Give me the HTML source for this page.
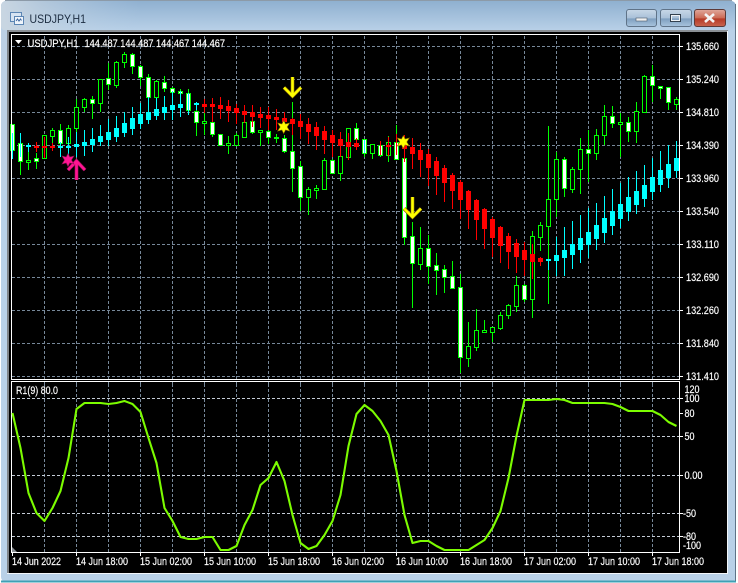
<!DOCTYPE html>
<html><head><meta charset="utf-8"><title>USDJPY,H1</title>
<style>
html,body{margin:0;padding:0;background:#fff;width:738px;height:583px;overflow:hidden}
svg{display:block}
text{font-family:"Liberation Sans",sans-serif;font-size:11px;fill:#fff;stroke:#fff;stroke-width:.18px}
</style></head><body>
<svg width="738" height="583" viewBox="0 0 738 583" xmlns="http://www.w3.org/2000/svg">
<defs>
<linearGradient id="tb" x1="0" y1="0" x2="0" y2="1"><stop offset="0" stop-color="#8fb0d0"/><stop offset="1" stop-color="#b9d1e8"/></linearGradient>
<linearGradient id="tl" x1="0" y1="0" x2="1" y2="0"><stop offset="0" stop-color="#c9d6e2"/><stop offset=".3" stop-color="#c9d6e2" stop-opacity=".6"/><stop offset="1" stop-color="#b9d1e8" stop-opacity="0"/></linearGradient>
<linearGradient id="bt" x1="0" y1="0" x2="0" y2="1"><stop offset="0" stop-color="#c8d8e8"/><stop offset=".5" stop-color="#a9c0d8"/><stop offset=".55" stop-color="#7f9fc0"/><stop offset="1" stop-color="#a8c4de"/></linearGradient>
<linearGradient id="cl" x1="0" y1="0" x2="0" y2="1"><stop offset="0" stop-color="#e0a89c"/><stop offset=".5" stop-color="#cc6a55"/><stop offset=".55" stop-color="#b63a26"/><stop offset="1" stop-color="#c9654f"/></linearGradient>
</defs>
<!-- window frame -->
<rect x="1" y="1" width="735" height="581" rx="5" fill="#b9d1e8"/>
<rect x="1" y="1" width="735" height="30" rx="5" fill="url(#tb)"/>
<rect x="1" y="1" width="140" height="30" rx="5" fill="url(#tl)"/>
<rect x="1" y="30" width="6" height="160" fill="#bcd0e4"/>
<path d="M1 581.5H736" stroke="#3fa0b4" stroke-width="2" fill="none"/>
<path d="M5 0.5H732" stroke="#8c9aa8" fill="none"/>
<path d="M735.5 4V581" stroke="#5d7488" fill="none"/>
<!-- title -->
<rect x="10.5" y="12.5" width="11" height="9" fill="#d7e4f2" stroke="#5c86b4"/>
<rect x="14.5" y="16.5" width="9" height="8" fill="#eef4fb" stroke="#5c86b4"/>
<path d="M16 21l1.5-2 1.5 2 1.500-2 1 1.500" stroke="#3a66a0" fill="none"/>
<text x="29.500" y="23" textLength="56.500" lengthAdjust="spacingAndGlyphs" style="font-size:12px;fill:#1c2c40;stroke:none">USDJPY,H1</text>
<!-- buttons -->
<rect x="626.500" y="9.500" width="30" height="17" rx="2.500" fill="url(#bt)" stroke="#5f7388"/>
<rect x="636" y="18" width="11" height="3" fill="#f0f0f0" stroke="#4b5a6a" stroke-width=".6"/>
<rect x="660.500" y="9.500" width="31" height="17" rx="2.500" fill="url(#bt)" stroke="#5f7388"/>
<rect x="670.500" y="14.500" width="10" height="7" fill="none" stroke="#33414f" stroke-width="1"/>
<rect x="671.500" y="15.500" width="8" height="5" fill="none" stroke="#eef2f6" stroke-width="1"/>
<rect x="694.500" y="9.500" width="31" height="17" rx="2.500" fill="url(#cl)" stroke="#5d3a38"/>
<path d="M705 14l9 8M714 14l-9 8" stroke="#f4f4f4" stroke-width="2.600" fill="none"/>
<!-- client -->
<rect x="7" y="30" width="721" height="3" fill="#8a8f94"/>
<rect x="7" y="30" width="2" height="543" fill="#7f8489"/>
<rect x="9" y="32" width="718" height="541" fill="#000"/>
<path d="M7 573.500H727.500V31" stroke="#f2f6fa" fill="none"/>
<g shape-rendering="crispEdges">
<!-- grid -->
<path d="M12 46.500H680M12 79.500H680M12 112.500H680M12 145.500H680M12 178.500H680M12 211.500H680M12 244.500H680M12 277.500H680M12 310.500H680M12 343.500H680M12 376.500H680" stroke="#778899" stroke-dasharray="3 2" fill="none"/>
<path d="M44.500 36V384M76.500 36V384M108.500 36V384M140.500 36V384M172.500 36V384M204.500 36V384M236.500 36V384M268.500 36V384M300.500 36V384M332.500 36V384M364.500 36V384M396.500 36V384M428.500 36V384M460.500 36V384M492.500 36V384M524.500 36V384M556.500 36V384M588.500 36V384M620.500 36V384M652.500 36V384M44.500 384V552M76.500 384V552M108.500 384V552M140.500 384V552M172.500 384V552M204.500 384V552M236.500 384V552M268.500 384V552M300.500 384V552M332.500 384V552M364.500 384V552M396.500 384V552M428.500 384V552M460.500 384V552M492.500 384V552M524.500 384V552M556.500 384V552M588.500 384V552M620.500 384V552M652.500 384V552" stroke="#778899" stroke-dasharray="3 2" fill="none"/>
<path d="M12 398.500H680M12 436.500H680M12 475.500H680M12 513.500H680M12 536.500H680" stroke="#c4ccd6" stroke-dasharray="3 2" fill="none"/>
<!-- regular wicks -->
<path stroke="#0f0" fill="none" d="M20.500 143V175M28.500 151V170M36.500 153V169M44.500 135V158M52.500 128V145M60.500 124V147M68.500 125V143M76.500 99V133M84.500 98V112M92.500 96V119M100.500 79V112M108.500 63V90M116.500 61V88M124.500 52V68M132.500 53V74M140.500 65V86M148.500 74V103M156.500 80V100M164.500 76V92M172.500 87V102M180.500 89V103M188.500 89V115M196.500 107V136M204.500 107V135M212.500 122V137M220.500 134V146M228.500 136V154M236.500 133V146M244.500 112V137M252.500 120V134M260.500 130V146M268.500 129V144M276.500 134V143M284.500 135V153M292.500 102V192M300.500 161V211M308.500 187V215M316.500 185V199M324.500 158V190M332.500 159V174M340.500 156V181M348.500 128V157M356.500 123V144M364.500 139V157M372.500 144V159M380.500 145V157M388.500 136V162M396.500 125V159M404.500 158V245M412.500 222V308M420.500 227V270M428.500 235V284M436.500 253V295M444.500 265V293M452.500 261V289M460.500 274V373M468.500 322V367M476.500 309V351M484.500 320V333M492.500 327V342M500.500 312V330M508.500 304V319M516.500 276V312M524.500 284V302M532.500 231V318M540.500 222V251M548.500 126V304M556.500 152V217M564.500 157V197M572.500 167V193M580.500 138V194M588.500 130V182M596.500 129V160M604.500 105V145M612.500 106V128M620.500 113V157M628.500 117V142M636.500 102V143M644.500 75V113M652.500 65V102M660.500 86V99M668.500 87V110M676.500 97V110"/>
<!-- bull candles -->
<path stroke="#0f0" fill="#000" d="M26.500 160.500h4v2h-4zM42.500 135.500h4v23h-4zM50.500 130.500h4v6h-4zM66.500 128.500h4v15h-4zM74.500 107.500h4v21h-4zM82.500 99.500h4v8h-4zM98.500 79.500h4v24h-4zM114.500 62.500h4v23h-4zM122.500 54.500h4v8h-4zM154.500 81.500h4v16h-4zM202.500 121.500h4v2h-4zM226.500 143.500h4v2h-4zM234.500 135.500h4v10h-4zM242.500 122.500h4v15h-4zM258.500 130.500h4v2h-4zM274.500 137.500h4v1h-4zM306.500 189.500h4v8h-4zM314.500 188.500h4v2h-4zM322.500 160.500h4v29h-4zM338.500 156.500h4v17h-4zM346.500 128.500h4v29h-4zM370.500 144.500h4v9h-4zM386.500 142.500h4v13h-4zM418.500 248.500h4v16h-4zM466.500 346.500h4v12h-4zM474.500 330.500h4v17h-4zM482.500 330.500h4v2h-4zM490.500 327.500h4v5h-4zM498.500 315.500h4v13h-4zM506.500 305.500h4v10h-4zM514.500 285.500h4v21h-4zM530.500 236.500h4v63h-4zM538.500 225.500h4v12h-4zM546.500 199.500h4v27h-4zM554.500 159.500h4v40h-4zM570.500 169.500h4v20h-4zM578.500 149.500h4v20h-4zM594.500 135.500h4v18h-4zM602.500 116.500h4v19h-4zM618.500 122.500h4v2h-4zM634.500 111.500h4v20h-4zM642.500 76.500h4v36h-4zM674.500 99.500h4v5h-4z"/>
<!-- heiken ashi bodies -->
<path fill="#f00" d="M34 146h5v2h-5zM42 146h5v2h-5zM50 146h5v2h-5zM202 104h5v3h-5zM210 104h5v3h-5zM218 105h5v4h-5zM226 106h5v5h-5zM234 108h5v5h-5zM242 111h5v4h-5zM250 112h5v5h-5zM258 114h5v4h-5zM266 115h5v4h-5zM274 117h5v3h-5zM282 118h5v4h-5zM290 119h5v5h-5zM298 121h5v6h-5zM306 124h5v8h-5zM314 127h5v9h-5zM322 131h5v9h-5zM330 135h5v8h-5zM338 139h5v7h-5zM346 142h5v5h-5zM354 143h5v4h-5zM378 145h5v2h-5zM386 145h5v2h-5zM394 145h5v2h-5zM402 143h5v6h-5zM410 147h5v7h-5zM418 150h5v10h-5zM426 154h5v14h-5zM434 161h5v15h-5zM442 168h5v15h-5zM450 175h5v16h-5zM458 182h5v18h-5zM466 191h5v19h-5zM474 200h5v20h-5zM482 209h5v20h-5zM490 219h5v19h-5zM498 227h5v19h-5zM506 236h5v16h-5zM514 243h5v14h-5zM522 250h5v10h-5zM530 254h5v8h-5zM538 258h5v4h-5z"/>
<path fill="#0ff" d="M10 145h5v5h-5zM18 144h5v3h-5zM26 145h5v2h-5zM58 146h5v2h-5zM66 146h5v2h-5zM74 144h5v3h-5zM82 142h5v4h-5zM90 139h5v6h-5zM98 136h5v6h-5zM106 132h5v8h-5zM114 128h5v9h-5zM122 123h5v10h-5zM130 118h5v11h-5zM138 114h5v10h-5zM146 112h5v8h-5zM154 109h5v7h-5zM162 107h5v6h-5zM170 105h5v5h-5zM178 104h5v4h-5zM186 103h5v4h-5zM194 103h5v2h-5zM362 144h5v3h-5zM546 259h5v2h-5zM554 255h5v6h-5zM562 250h5v8h-5zM570 244h5v11h-5zM578 238h5v12h-5zM586 232h5v13h-5zM594 225h5v14h-5zM602 218h5v15h-5zM610 211h5v15h-5zM618 204h5v15h-5zM626 197h5v15h-5zM634 191h5v14h-5zM642 185h5v14h-5zM650 177h5v15h-5zM658 170h5v15h-5zM666 164h5v14h-5zM674 158h5v13h-5z"/>
<!-- bear white candles -->
<path stroke="#0f0" fill="#fff" d="M10.500 124.500h4v26h-4zM18.500 143.500h4v18h-4zM34.500 158.500h4v3h-4zM58.500 130.500h4v13h-4zM90.500 99.500h4v4h-4zM106.500 78.500h4v6h-4zM130.500 54.500h4v12h-4zM138.500 66.500h4v11h-4zM146.500 77.500h4v20h-4zM162.500 82.500h4v6h-4zM170.500 88.500h4v4h-4zM178.500 91.500h4v2h-4zM186.500 93.500h4v17h-4zM194.500 111.500h4v11h-4zM210.500 122.500h4v12h-4zM218.500 134.500h4v11h-4zM250.500 121.500h4v11h-4zM266.500 131.500h4v6h-4zM282.500 138.500h4v13h-4zM290.500 151.500h4v17h-4zM298.500 166.500h4v31h-4zM330.500 160.500h4v13h-4zM354.500 128.500h4v11h-4zM362.500 139.500h4v14h-4zM378.500 145.500h4v10h-4zM394.500 142.500h4v17h-4zM402.500 158.500h4v79h-4zM410.500 236.500h4v27h-4zM426.500 248.500h4v18h-4zM434.500 265.500h4v5h-4zM442.500 269.500h4v8h-4zM450.500 276.500h4v12h-4zM458.500 287.500h4v70h-4zM522.500 285.500h4v14h-4zM562.500 159.500h4v29h-4zM586.500 149.500h4v4h-4zM610.500 116.500h4v7h-4zM626.500 122.500h4v9h-4zM650.500 76.500h4v9h-4zM658.500 86.500h4v2h-4zM666.500 87.500h4v15h-4z"/>
<!-- HA wicks -->
<path stroke="#f00" fill="none" d="M36.500 142V152M44.500 137V158M52.500 143V151M204.500 99V113M212.500 98V122M220.500 97V119M228.500 100V122M236.500 104V124M244.500 105V123M252.500 105V127M260.500 107V128M268.500 107V130M276.500 109V130M284.500 112V132M292.500 118V135M300.500 114V139M308.500 118V144M316.500 122V150M324.500 126V154M332.500 130V157M340.500 132V157M348.500 133V160M356.500 138V150M380.500 141V155M388.500 137V156M396.500 134V155M404.500 135V162M412.500 138V169M420.500 143V177M428.500 149V186M436.500 157V195M444.500 165V202M452.500 173V209M460.500 180V219M468.500 190V229M476.500 199V240M484.500 208V249M492.500 217V257M500.500 226V263M508.500 233V269M516.500 239V273M524.500 242V276M532.500 244V279M540.500 257V266"/>
<path stroke="#0ff" fill="none" d="M12.500 133V159M20.500 133V157M28.500 143V152M60.500 142V157M68.500 137V155M76.500 132V157M84.500 130V156M92.500 128V152M100.500 125V146M108.500 119V146M116.500 116V142M124.500 112V137M132.500 107V135M140.500 103V129M148.500 97V124M156.500 98V120M164.500 96V120M172.500 91V120M180.500 91V117M188.500 93V115M196.500 102V110M364.500 140V153M548.500 259V270M556.500 237V276M564.500 227V276M572.500 221V269M580.500 215V263M588.500 208V258M596.500 203V250M604.500 196V243M612.500 189V235M620.500 183V228M628.500 177V221M636.500 171V214M644.500 165V207M652.500 158V200M660.500 151V192M668.500 145V188M676.500 141V178"/>
<!-- frames -->
<rect x="11.500" y="34.500" width="668" height="345" fill="none" stroke="#fff"/>
<rect x="11.500" y="381.500" width="668" height="171" fill="none" stroke="#fff"/>
<path d="M11.500 34.500V379M11 35H12" stroke="#fff" fill="none"/>
<path d="M12.500 552V556M76.500 552V556M140.500 552V556M204.500 552V556M268.500 552V556M332.500 552V556M396.500 552V556M460.500 552V556M524.500 552V556M588.500 552V556M652.500 552V556M680 46.500h3M680 79.500h3M680 112.500h3M680 145.500h3M680 178.500h3M680 211.500h3M680 244.500h3M680 277.500h3M680 310.500h3M680 343.500h3M680 376.500h3M680 398.500h3M680 413.500h3M680 436.500h3M680 475.500h3M680 513.500h3M680 536.500h3" stroke="#fff" fill="none"/>
</g>
<path d="M12 547l5 5h-5z" fill="#8a8f94"/>
<!-- indicator -->
<polyline fill="none" stroke="#7cfc00" stroke-width="2.100" stroke-linejoin="round" points="12.500,413 20.500,448 28.500,493 36.500,513 44.500,521 52.500,508 60.500,491 68.500,458 76.500,409 84.500,403 92.500,403 100.500,403 108.500,404 116.500,403 124.500,401 132.500,404 140.500,412 148.500,438 156.500,463 164.500,508 172.500,521 180.500,537 188.500,539 196.500,539 204.500,537 212.500,537 220.500,550 228.500,550 236.500,546 244.500,525 252.500,510 260.500,485 268.500,478 276.500,462 284.500,481 292.500,515 300.500,543 308.500,549 316.500,546 324.500,535 332.500,521 340.500,495 348.500,446 356.500,414 364.500,405 372.500,411 380.500,421 388.500,435 396.500,471 404.500,515 412.500,543 420.500,541 428.500,541 436.500,546 444.500,550 452.500,550 460.500,550 468.500,550 476.500,545 484.500,540 492.500,528 500.500,511 508.500,478 516.500,436 524.500,400 532.500,400 540.500,400 548.500,400 556.500,399 564.500,400 572.500,403 580.500,403 588.500,403 596.500,403 604.500,403 612.500,404 620.500,407 628.500,411 636.500,411 644.500,411 652.500,411 660.500,415 668.500,422 676.500,426"/>
<!-- arrows -->
<g fill="none" stroke-linejoin="miter">
<path d="M76.500 180V161M68 170L76.500 161L85 170" stroke="#8a0f50" stroke-width="3.800"/>
<path d="M76.500 180V161M68 170L76.500 161L85 170" stroke="#ff1493" stroke-width="2.600"/>
<path d="M292.500 77V96M284 87.500L292.500 96L301 87.500" stroke="#7a5a00" stroke-width="3.800"/>
<path d="M292.500 77V96M284 87.500L292.500 96L301 87.500" stroke="#ff0" stroke-width="2.600"/>
<path d="M412.500 197V217M404 208.500L412.500 217L421 208.500" stroke="#7a5a00" stroke-width="3.800"/>
<path d="M412.500 197V217M404 208.500L412.500 217L421 208.500" stroke="#ff0" stroke-width="2.600"/>
</g>
<polygon fill="#ff1493" stroke="#8a0f50" stroke-width=".6" points="68,153.500 69.800,157 74,156 71.500,160 74,164 69.800,163 68,166.500 66.200,163 62,164 64.500,160 62,156 66.200,157"/>
<polygon fill="#ff0" stroke="#8a6a00" stroke-width=".6" points="283.700,120.500 285.500,124 289.700,123 287.200,127 289.700,131 285.500,130 283.700,133.500 281.900,130 277.700,131 280.200,127 277.700,123 281.900,124"/>
<polygon fill="#ff0" stroke="#8a6a00" stroke-width=".6" points="403.300,135.500 405.100,139 409.300,138 406.800,142 409.300,146 405.100,145 403.300,148.500 401.500,145 397.300,146 399.800,142 397.300,138 401.500,139"/>
<!-- labels -->
<path d="M15 40h7l-3.500 4z" fill="#fff"/>
<text x="27.500" y="47" textLength="51" lengthAdjust="spacingAndGlyphs">USDJPY,H1</text>
<text x="84.500" y="47" textLength="140.500" lengthAdjust="spacingAndGlyphs">144.487 144.487 144.467 144.467</text>
<text x="16" y="394" textLength="42" lengthAdjust="spacingAndGlyphs">R1(9) 80.0</text>
<text x="686" y="50" textLength="33" lengthAdjust="spacingAndGlyphs">135.660</text>
<text x="686" y="83" textLength="33" lengthAdjust="spacingAndGlyphs">135.240</text>
<text x="686" y="116" textLength="33" lengthAdjust="spacingAndGlyphs">134.810</text>
<text x="686" y="149" textLength="33" lengthAdjust="spacingAndGlyphs">134.390</text>
<text x="686" y="182" textLength="33" lengthAdjust="spacingAndGlyphs">133.960</text>
<text x="686" y="215" textLength="33" lengthAdjust="spacingAndGlyphs">133.540</text>
<text x="686" y="248" textLength="33" lengthAdjust="spacingAndGlyphs">133.110</text>
<text x="686" y="281" textLength="33" lengthAdjust="spacingAndGlyphs">132.690</text>
<text x="686" y="314" textLength="33" lengthAdjust="spacingAndGlyphs">132.260</text>
<text x="686" y="347" textLength="33" lengthAdjust="spacingAndGlyphs">131.840</text>
<text x="686" y="380" textLength="33" lengthAdjust="spacingAndGlyphs">131.410</text>
<text x="684.500" y="393" textLength="15" lengthAdjust="spacingAndGlyphs">120</text>
<text x="684.500" y="402" textLength="15" lengthAdjust="spacingAndGlyphs">100</text>
<text x="684.500" y="417" textLength="10" lengthAdjust="spacingAndGlyphs">80</text>
<text x="684.500" y="440" textLength="10" lengthAdjust="spacingAndGlyphs">50</text>
<text x="684.500" y="479" textLength="18" lengthAdjust="spacingAndGlyphs">0.00</text>
<text x="683" y="517" textLength="13" lengthAdjust="spacingAndGlyphs">-50</text>
<text x="683" y="540" textLength="13" lengthAdjust="spacingAndGlyphs">-80</text>
<text x="683" y="549" textLength="18" lengthAdjust="spacingAndGlyphs">-100</text>
<text x="12" y="565" textLength="49" lengthAdjust="spacingAndGlyphs">14 Jun 2022</text>
<text x="76" y="565" textLength="52" lengthAdjust="spacingAndGlyphs">14 Jun 18:00</text>
<text x="140" y="565" textLength="52" lengthAdjust="spacingAndGlyphs">15 Jun 02:00</text>
<text x="204" y="565" textLength="52" lengthAdjust="spacingAndGlyphs">15 Jun 10:00</text>
<text x="268" y="565" textLength="52" lengthAdjust="spacingAndGlyphs">15 Jun 18:00</text>
<text x="332" y="565" textLength="52" lengthAdjust="spacingAndGlyphs">16 Jun 02:00</text>
<text x="396" y="565" textLength="52" lengthAdjust="spacingAndGlyphs">16 Jun 10:00</text>
<text x="460" y="565" textLength="52" lengthAdjust="spacingAndGlyphs">16 Jun 18:00</text>
<text x="524" y="565" textLength="52" lengthAdjust="spacingAndGlyphs">17 Jun 02:00</text>
<text x="588" y="565" textLength="52" lengthAdjust="spacingAndGlyphs">17 Jun 10:00</text>
<text x="652" y="565" textLength="52" lengthAdjust="spacingAndGlyphs">17 Jun 18:00</text>
</svg>
</body></html>
